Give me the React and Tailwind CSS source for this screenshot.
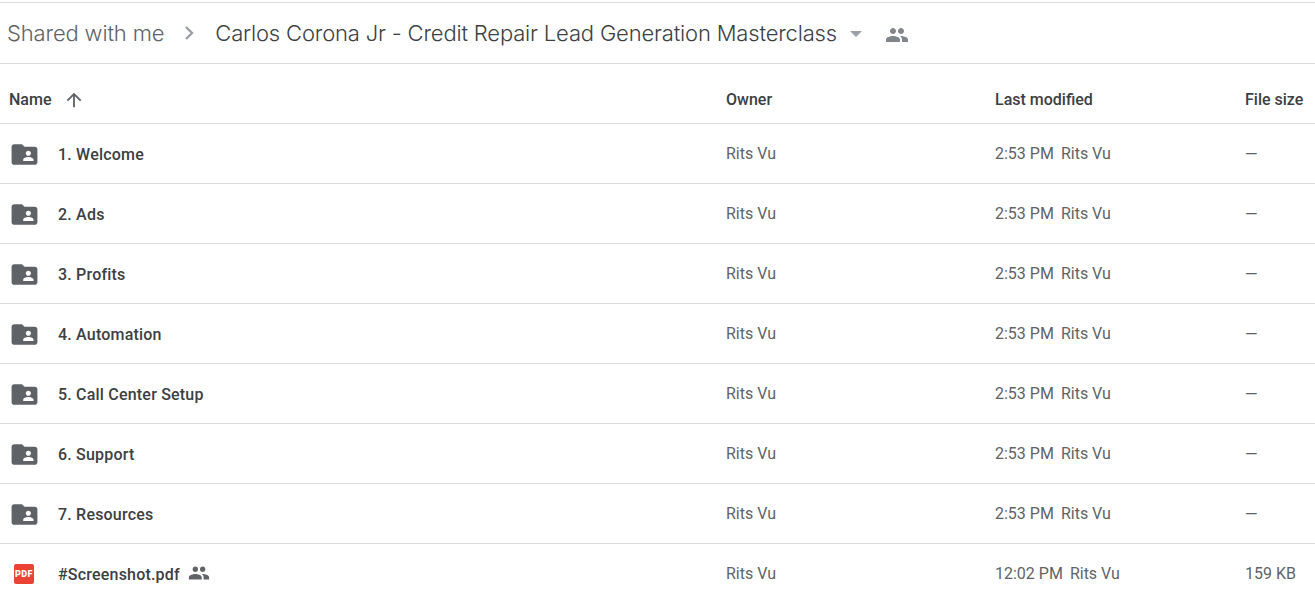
const rows = [
  { name: '1. Welcome', time: '2:53 PM', size: '—' },
  { name: '2. Ads', time: '2:53 PM', size: '—' },
  { name: '3. Profits', time: '2:53 PM', size: '—' },
  { name: '4. Automation', time: '2:53 PM', size: '—' },
  { name: '5. Call Center Setup', time: '2:53 PM', size: '—' },
  { name: '6. Support', time: '2:53 PM', size: '—' },
  { name: '7. Resources', time: '2:53 PM', size: '—' },
  { name: '#Screenshot.pdf', time: '12:02 PM', size: '159 KB', pdf: true },
]

const PEOPLE = 'M16 11c1.66 0 2.99-1.34 2.99-3S17.66 5 16 5s-3 1.34-3 3 1.34 3 3 3zm-8 0c1.66 0 2.99-1.34 2.99-3S9.66 5 8 5 5 6.34 5 8s1.34 3 3 3zm0 2c-2.33 0-7 1.17-7 3.5V19h14v-2.5C15 14.17 10.33 13 8 13zm8 0c-.29 0-.62.02-.97.05 1.16.84 1.97 1.97 1.97 3.45V19h6v-2.5c0-2.33-4.67-3.5-7-3.5z'

function People({ className }) {
  return (
    <svg className={className} viewBox="0 0 24 24" fill="currentColor">
      <path d={PEOPLE} />
    </svg>
  )
}

function SharedFolder() {
  return (
    <svg className="h-[31px] w-[31px] translate-y-[1px]" viewBox="0 0 24 24" fill="#5f6368">
      <path d="M20 6h-8l-2-2H4c-1.1 0-2 .9-2 2v12c0 1.1.9 2 2 2h16c1.1 0 2-.9 2-2V8c0-1.1-.9-2-2-2zm-5 3c1.1 0 2 .9 2 2s-.9 2-2 2-2-.9-2-2 .9-2 2-2zm4 8h-8v-1c0-1.33 2.67-2 4-2s4 .67 4 2v1z" />
    </svg>
  )
}

function PdfIcon() {
  return (
    <div className="flex h-5 w-5 items-center justify-center rounded-[2px] bg-[#ea4335] font-['Roboto',sans-serif] text-[9px] leading-none font-black tracking-[0.4px] text-white">
      PDF
    </div>
  )
}

export default function App() {
  return (
    <div className="h-[601px] overflow-hidden bg-white pt-[2px] font-['Roboto',sans-serif]">
      <div className="flex h-[62px] items-center border-y border-[#dadce0] pl-[7px]">
        <span className="font-['Inter',sans-serif] text-[22px] font-light tracking-[-0.15px] text-[#5f6368]">Shared with me</span>
        <svg className="ml-[13px] h-6 w-6" viewBox="0 0 24 24" fill="none" stroke="#9aa0a6" strokeWidth="2.4">
          <path d="M9 6l6 6-6 6" />
        </svg>
        <span className="ml-[14px] font-['Inter',sans-serif] text-[22px] font-light tracking-[-0.17px] text-[#3c4043]">Carlos Corona Jr - Credit Repair Lead Generation Masterclass</span>
        <svg className="ml-[12px] h-[10px] w-[14px] translate-y-[1px]" viewBox="0 0 14 10" fill="#9aa0a6">
          <path d="M1 2h12L7 8z" />
        </svg>
        <People className="ml-[22px] h-6 w-6 translate-y-[2px] text-[#80868b]" />
      </div>
      <div className="flex h-[60px] items-center border-b border-[#dadce0] pt-[12px] text-base font-medium text-[#3c4043]">
        <div className="flex w-[726px] items-center pl-[9px]">
          <span>Name</span>
          <svg className="ml-[12px] h-[22px] w-[22px]" viewBox="0 0 24 24" fill="#5f6368">
            <path d="M4 12l1.41 1.41L11 7.83V20h2V7.83l5.58 5.59L20 12l-8-8-8 8z" />
          </svg>
        </div>
        <div className="w-[269px]">Owner</div>
        <div className="w-[250px]">Last modified</div>
        <div>File size</div>
      </div>
      {rows.map((row) => (
        <div key={row.name} className="flex h-[60px] items-center border-b border-[#dadce0] text-base text-[#5f6368] last:border-b-0">
          <div className="flex w-[726px] items-center">
            <div className="flex w-[58px] justify-center pr-[10px]">
              {row.pdf ? <PdfIcon /> : <SharedFolder />}
            </div>
            <span className="translate-y-[1px] font-medium tracking-[0.2px] text-[#3c4043]">{row.name}</span>
            {row.pdf && <People className="ml-[8px] h-[22px] w-[22px] -translate-y-[1px] text-[#5f6368]" />}
          </div>
          <div className="w-[269px]">Rits Vu</div>
          <div className="w-[250px]">
            {row.time}
            <span className="ml-[7px]">Rits Vu</span>
          </div>
          <div className={row.pdf ? '' : 'translate-y-[1px]'}>{row.size}</div>
        </div>
      ))}
    </div>
  )
}
